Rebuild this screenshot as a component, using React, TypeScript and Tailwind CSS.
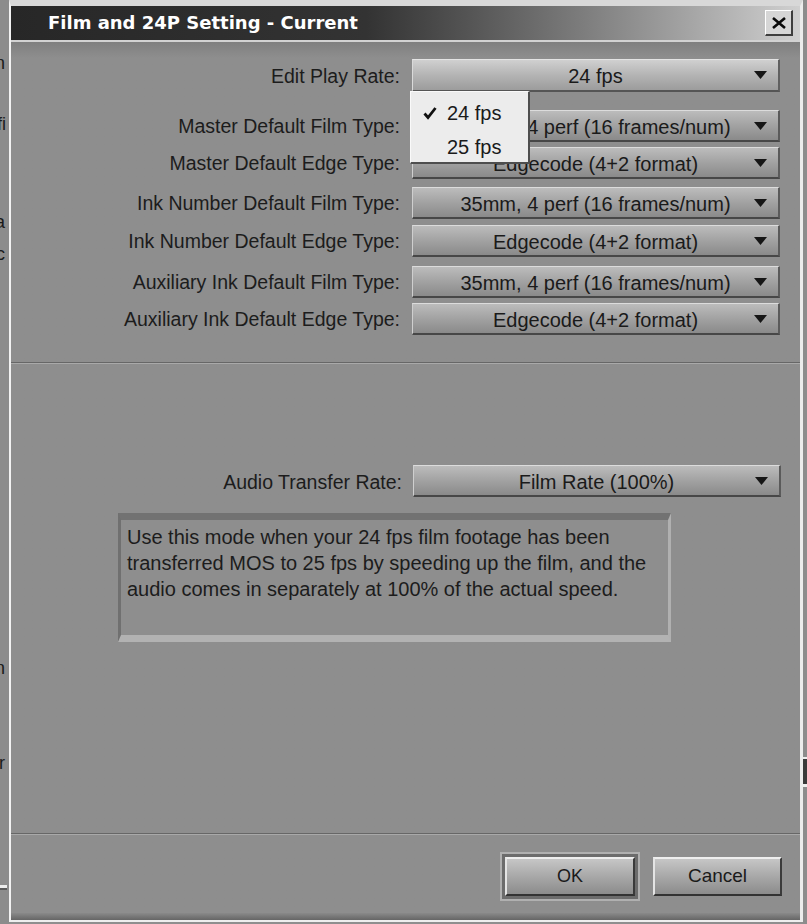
import React from "react";

const ui = "font-['Liberation_Sans',Arial,sans-serif]";

function Arrow() {
  return (
    <svg
      width="13"
      height="8"
      viewBox="0 0 13 8"
      className="absolute right-[11px] top-1/2 -translate-y-1/2"
    >
      <path d="M0 0H13L6.5 8Z" fill="#161616" />
    </svg>
  );
}

function Select({ value, open }: { value: string; open?: boolean }) {
  return (
    <div
      className={
        open
          ? "relative flex items-center justify-center w-[368px] h-[33px] border-t border-l border-t-[#e4e4e4] border-l-[#dadada] border-b-2 border-r-2 border-b-[#555555] border-r-[#606060] bg-linear-to-b from-[#d0d0d0] via-[#b4b4b4] to-[#9c9c9c] text-[20px] text-[#1a1a1a]"
          : "relative flex items-center justify-center w-[368px] h-[32px] border-t border-l border-t-[#dcdcdc] border-l-[#cfcfcf] border-b-2 border-r-2 border-b-[#474747] border-r-[#5a5a5a] bg-linear-to-b from-[#bcbcbc] via-[#a2a2a2] to-[#8a8a8a] text-[20px] text-[#1a1a1a]"
      }
    >
      <span className="leading-none mt-[2px]">{value}</span>
      <Arrow />
      {open && (
        <div className="absolute left-[-3px] top-[calc(100%+1px)] z-10 w-[120px] h-[73px] pt-[4px] bg-[#ececec] border-t border-l border-[#fafafa] border-r-2 border-b-2 border-r-[#4e4e4e] border-b-[#4e4e4e] text-[20px]">
          <div className="flex items-center h-[34px]">
            <div className="w-[36px] pl-[12px]">
              <svg width="14" height="14" viewBox="0 0 14 14">
                <path d="M1.5 7.5L5 11.5L12.5 2" stroke="#111" strokeWidth="2.8" fill="none" />
              </svg>
            </div>
            <span className="leading-none">24 fps</span>
          </div>
          <div className="flex items-center h-[33px] pl-[36px]">
            <span className="leading-none">25 fps</span>
          </div>
        </div>
      )}
    </div>
  );
}

function Row({ label, value, className, open }: { label: string; value: string; className: string; open?: boolean }) {
  return (
    <div className={"flex items-center gap-[12px] " + className}>
      <div className="w-[389px] text-right text-[19.5px] leading-none text-[#1c1c1c] mt-[2px]">{label}</div>
      <Select value={value} open={open} />
    </div>
  );
}

function Separator() {
  return (
    <div className="flex flex-col">
      <div className="h-px bg-[#676767]" />
      <div className="h-px bg-[#a9a9a9]" />
    </div>
  );
}

export default function App() {
  return (
    <div className={"flex w-[807px] h-[924px] bg-[#8e8e8e] overflow-hidden " + ui}>
      {/* window behind, left edge */}
      <div className="relative w-[9px] h-full shrink-0 overflow-hidden bg-[#8c8c8c] text-[18px] text-[#1a1a1a] leading-none">
        <span className="absolute right-[4px] top-[54px]">in</span>
        <span className="absolute right-[3px] top-[115px]">fi</span>
        <span className="absolute right-[4px] top-[213px]">ra</span>
        <span className="absolute right-[4px] top-[245px]">c</span>
        <span className="absolute right-[4px] top-[659px]">n</span>
        <span className="absolute right-[4px] top-[754px]">r</span>
        <div className="absolute left-0 top-[885px] w-[7px] h-[3px] bg-[#ececec]" />
        <div className="absolute left-0 top-[888px] w-[7px] h-[2px] bg-[#5a5a5a]" />
      </div>

      {/* dialog */}
      <div className="flex flex-col w-[794px] h-[922px] shrink-0 border-t-[6px] border-t-[#d8d8d8] border-l-2 border-l-[#f2f2f2] border-r-[3px] border-r-[#ececec] border-b-2 border-b-[#eeeeee]">
        {/* title bar */}
        <div className="flex items-center justify-between h-[34px] pl-[37px] pr-[7px] bg-linear-to-r from-[#272727] via-[#333333] via-45% to-[#d0d0d0]">
          <span className="font-['DejaVu_Sans',Verdana,sans-serif] font-bold text-[18px] text-white leading-none mt-[-1px]">
            Film and 24P Setting - Current
          </span>
          <button className="flex items-center justify-center w-[28px] h-[26px] bg-[#d6d6d6] border-t border-l border-white border-r-2 border-b-2 border-r-[#3e3e3e] border-b-[#3e3e3e]">
            <svg width="16" height="12" viewBox="0 0 16 12">
              <path d="M2 1L14 11M14 1L2 11" stroke="#0a0a0a" strokeWidth="2.6" />
            </svg>
          </button>
        </div>

        {/* body */}
        <div className="flex flex-col flex-1 border-t-2 border-t-[#d2d2d2] bg-linear-to-b from-[#7f7f7f] to-[#8e8e8e] to-[16px]">
          <div className="flex flex-col pt-[17px]">
            <Row label="Edit Play Rate:" value="24 fps" className="relative z-10" open />
            <Row label="Master Default Film Type:" value="35mm, 4 perf (16 frames/num)" className="mt-[18px]" />
            <Row label="Master Default Edge Type:" value="Edgecode (4+2 format)" className="mt-[5px]" />
            <Row label="Ink Number Default Film Type:" value="35mm, 4 perf (16 frames/num)" className="mt-[8px]" />
            <Row label="Ink Number Default Edge Type:" value="Edgecode (4+2 format)" className="mt-[6px]" />
            <Row label="Auxiliary Ink Default Film Type:" value="35mm, 4 perf (16 frames/num)" className="mt-[9px]" />
            <Row label="Auxiliary Ink Default Edge Type:" value="Edgecode (4+2 format)" className="mt-[5px]" />
          </div>

          <div className="mt-[27px]">
            <Separator />
          </div>

          <div className="flex items-center gap-[11px] mt-[101px]">
            <div className="w-[391px] text-right text-[19.5px] leading-none text-[#1c1c1c] mt-[3px]">Audio Transfer Rate:</div>
            <Select value="Film Rate (100%)" />
          </div>

          <div className="ml-[107px] mt-[16px] w-[553px] h-[129px] border-t-[7px] border-t-[#727272] border-l-[3px] border-l-[#707070] border-b-[7px] border-b-[#b2b2b2] border-r-[3px] border-r-[#b0b0b0] bg-[#8e8e8e] pl-[6px] pt-[4px] text-[20px] leading-[26px] text-[#1c1c1c]">
            Use this mode when your 24 fps film footage has been
            <br />
            transferred MOS to 25 fps by speeding up the film, and the
            <br />
            audio comes in separately at 100% of the actual speed.
          </div>

          <div className="mt-[191px]">
            <Separator />
          </div>

          <div className="flex justify-end items-center gap-[13px] pr-[18px] mt-[17px]">
            <div className="p-[3px] border-2 border-[#b0b0b0] bg-[#6c6c6c]">
              <button className="flex items-center justify-center w-[130px] h-[39px] border-t-2 border-l-2 border-t-[#eeeeee] border-l-[#e4e4e4] border-b-2 border-r-2 border-b-[#333333] border-r-[#3a3a3a] bg-linear-to-b from-[#c6c6c6] via-[#a8a8a8] to-[#8c8c8c] text-[18px] text-[#1a1a1a]">
                OK
              </button>
            </div>
            <button className="flex items-center justify-center w-[129px] h-[39px] border-t-2 border-l-2 border-t-[#eeeeee] border-l-[#e4e4e4] border-b-2 border-r-2 border-b-[#333333] border-r-[#3a3a3a] bg-linear-to-b from-[#c6c6c6] via-[#a8a8a8] to-[#8c8c8c] text-[19px] text-[#1a1a1a]">
              Cancel
            </button>
          </div>

          <div className="flex-1" />
          <div className="h-[7px] bg-linear-to-b from-[#8a8a8a] to-[#666666]" />
        </div>
      </div>

      {/* window behind, right edge */}
      <div className="flex flex-col flex-1 bg-[#8c8c8c]">
        <div className="mt-[757px] h-[2px] bg-[#eeeeee]" />
        <div className="h-[25px] bg-[#3a3a3a]" />
        <div className="h-[3px] bg-[#eeeeee]" />
      </div>
    </div>
  );
}
